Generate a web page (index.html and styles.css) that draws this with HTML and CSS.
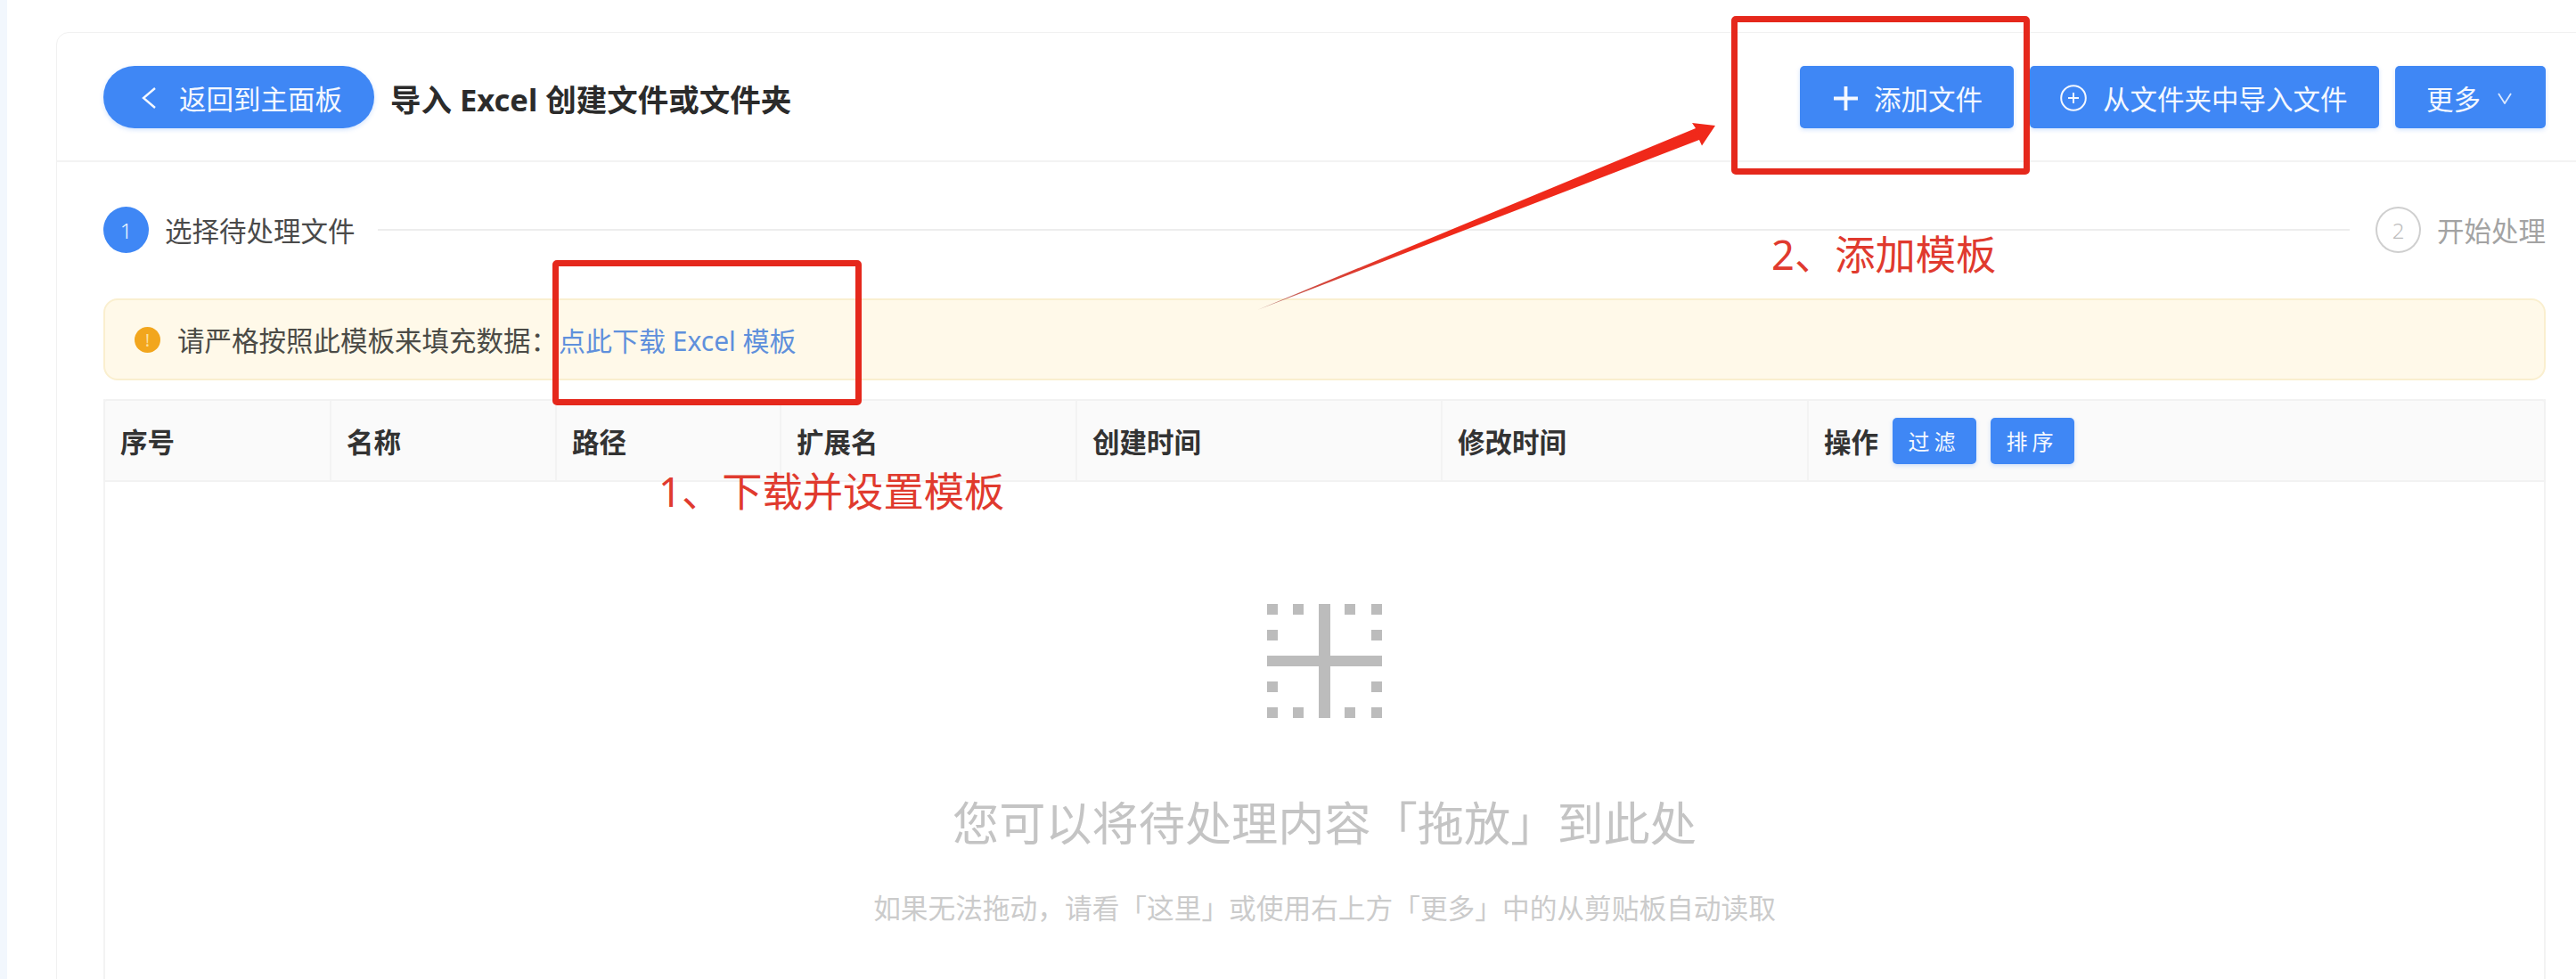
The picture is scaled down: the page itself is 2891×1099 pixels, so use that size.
FILE: index.html
```html
<!DOCTYPE html>
<html lang="zh-CN">
<head>
<meta charset="utf-8">
<title>导入 Excel 创建文件或文件夹</title>
<link rel="stylesheet" href="styles.css">
</head>
<body>
<div class="page">
  <aside class="strip"></aside>
  <main class="main">
    <section class="card">
      <header class="topbar">
        <button class="btn back">
          <svg class="ico-back" viewBox="0 0 18 26"><path d="M16 2 3 13l13 11"/></svg>
          <span>返回到主面板</span>
        </button>
        <h1 class="title">导入 Excel 创建文件或文件夹</h1>
        <div class="actions">
          <button class="btn add">
            <svg class="ico-plus" viewBox="0 0 27 27"><path d="M13.5 0v27M0 13.5h27"/></svg>
            <span>添加文件</span>
          </button>
          <button class="btn import">
            <svg class="ico-circle" viewBox="0 0 30 30"><circle cx="15" cy="15" r="13.8"/><path d="M15 9v12M9 15h12"/></svg>
            <span>从文件夹中导入文件</span>
          </button>
          <button class="btn more">
            <span>更多</span>
            <svg class="ico-down" viewBox="0 0 16 13"><path d="M1 1l7 11 7-11"/></svg>
          </button>
        </div>
      </header>

      <div class="body">
        <div class="steps">
          <span class="step-num active">1</span>
          <span class="step-text">选择待处理文件</span>
          <span class="step-line"></span>
          <span class="step-num">2</span>
          <span class="step-text muted">开始处理</span>
        </div>

        <div class="alert">
          <span class="alert-ico">!</span>
          <span class="alert-text">请严格按照此模板来填充数据：</span>
          <a class="alert-link">点此下载 Excel 模板</a>
        </div>

        <div class="table">
          <div class="thead">
            <div class="th">序号</div>
            <div class="th">名称</div>
            <div class="th">路径</div>
            <div class="th">扩展名</div>
            <div class="th">创建时间</div>
            <div class="th">修改时间</div>
            <div class="th last">
              <span>操作</span>
              <button class="btn mini">过滤</button>
              <button class="btn mini">排序</button>
            </div>
          </div>
          <div class="empty">
            <svg class="empty-ico" viewBox="0 0 129 128">
              <rect x="0" y="0" width="12" height="12"/><rect x="29" y="0" width="12" height="12"/>
              <rect x="87" y="0" width="12" height="12"/><rect x="117" y="0" width="12" height="12"/>
              <rect x="0" y="29" width="12" height="12"/><rect x="117" y="29" width="12" height="12"/>
              <rect x="0" y="87" width="12" height="12"/><rect x="117" y="87" width="12" height="12"/>
              <rect x="0" y="116" width="12" height="12"/><rect x="29" y="116" width="12" height="12"/>
              <rect x="87" y="116" width="12" height="12"/><rect x="117" y="116" width="12" height="12"/>
              <rect x="58" y="0" width="13" height="128"/><rect x="0" y="58" width="129" height="12"/>
            </svg>
            <p class="empty-title">您可以将待处理内容「拖放」到此处</p>
            <p class="empty-sub">如果无法拖动，请看「这里」或使用右上方「更多」中的从剪贴板自动读取</p>
          </div>
        </div>
      </div>
    </section>
  </main>

  <div class="mark box-one"></div>
  <div class="mark box-two"></div>
  <div class="note note-one">1、下载并设置模板</div>
  <div class="note note-two">2、添加模板</div>
  <svg class="arrow" viewBox="0 0 530 225">
    <defs>
      <linearGradient id="arrow-fill" x1="0" y1="1" x2="1" y2="0">
        <stop offset="0" stop-color="#b98d88"/>
        <stop offset="0.12" stop-color="#d14a40"/>
        <stop offset="0.35" stop-color="#ef2a1a"/>
        <stop offset="1" stop-color="#f0281a"/>
      </linearGradient>
    </defs>
    <path fill="url(#arrow-fill)" d="M1 222 493 18 489 12 515 15 500 37.5 497 31Z"/>
  </svg>
</div>
</body>
</html>
```

FILE: styles.css
```css
* { box-sizing: border-box; }
html, body { margin: 0; height: 100%; background: #fff; }
body {
  font-family: "Noto Sans", "Noto Sans CJK SC", sans-serif;
  overflow: hidden;
}
.page { position: relative; display: flex; width: 2891px; height: 1099px; overflow: hidden; }
.strip { flex: 0 0 8px; background: #f2f7fd; }
.main { flex: 1; min-width: 0; padding: 36px 0 0 55px; }
.card {
  width: 2845px;
  height: 1080px;
  border: 1px solid #f1f1f1;
  border-radius: 14px 14px 0 0;
  background: #fff;
}
.topbar {
  display: flex;
  align-items: center;
  height: 145px;
  padding: 0 50px 0 52px;
  border-bottom: 2px solid #f3f3f3;
}
.btn {
  display: inline-flex;
  align-items: center;
  height: 70px;
  padding-top: 4px;
  border: 0;
  border-radius: 5px;
  background: #3f87f5;
  color: #f4f8ff;
  font: inherit;
  font-size: 30.5px;
  white-space: nowrap;
  box-shadow: 0 2px 5px rgba(63, 135, 245, .22);
}
.back { width: 304px; padding-left: 42px; gap: 25px; border-radius: 35px; }
.ico-back { width: 18px; height: 26px; fill: none; stroke: #f4f8ff; stroke-width: 2.4; }
.title { margin: 6px 0 0 18px; font-size: 34.5px; line-height: 48px; font-weight: 700; color: #2b2b2b; }
.actions { display: flex; margin-left: auto; gap: 18px; }
.add { width: 240px; padding-left: 38px; gap: 18px; }
.import { width: 392px; padding-left: 34px; gap: 18px; }
.more { width: 169px; padding-left: 35px; gap: 19px; }
.ico-plus { width: 27px; height: 27px; fill: none; stroke: #f4f8ff; stroke-width: 3.8; }
.ico-circle { width: 30px; height: 30px; fill: none; stroke: #f4f8ff; stroke-width: 2; }
.ico-down { width: 16px; height: 13px; fill: none; stroke: #dbe8fd; stroke-width: 1.8; }

.body { padding: 50px 50px 0 52px; }
.steps { display: flex; align-items: center; height: 52px; }
.step-num {
  display: flex;
  align-items: center;
  justify-content: center;
  flex: 0 0 51px;
  height: 52px;
  border: 2px solid #cfcfcf;
  border-radius: 50%;
  color: #bdbdbd;
  font-size: 24px;
  font-weight: 300;
}
.step-num.active { border-color: #3f87f5; background: #3f87f5; color: #eef5ff; }
.step-text { margin-left: 18px; font-size: 30.5px; color: #4a4a4a; white-space: nowrap; }
.step-text.muted { color: #a3a3a3; }
.step-line { flex: 1; height: 2px; margin: 0 29px 0 25px; background: #ededed; }

.alert {
  display: flex;
  align-items: center;
  height: 92px;
  margin-top: 51px;
  padding-left: 33px;
  border: 2px solid #faefcf;
  border-radius: 16px;
  background: #fff9e9;
  font-size: 30.5px;
}
.alert-ico {
  display: flex;
  align-items: center;
  justify-content: center;
  flex: 0 0 29px;
  height: 29px;
  border-radius: 50%;
  background: #f2a61d;
  color: #fbdf9c;
  font-size: 20px;
}
.alert-text { margin-left: 19px; color: #4b4b46; white-space: nowrap; }
.alert-link { margin-left: 1px; font-size: 30px; color: #5f90dc; white-space: nowrap; }

.table { margin-top: 21px; height: 652px; border: solid #f3f3f3; border-width: 0 2px; }
.thead {
  display: grid;
  grid-template-columns: 252px 253px 252px 332px 410px 411px 1fr;
  height: 93px;
  margin: 0 -2px;
  border: 2px solid #f2f2f2;
  border-radius: 4px 4px 0 0;
  background: #fafafa;
}
.th {
  display: flex;
  align-items: center;
  padding-left: 17px;
  border-left: 2px solid #f3f3f3;
  font-size: 30.5px;
  font-weight: 700;
  color: #333;
}
.th:first-child { border-left: 0; }
.last { gap: 16px; }
.mini {
  justify-content: center;
  width: 94px;
  height: 52px;
  padding-top: 0;
  padding-left: 5px;
  font-size: 24px;
  font-weight: 400;
  letter-spacing: 5px;
}
.empty { display: flex; flex-direction: column; align-items: center; padding-top: 137px; }
.empty-ico { width: 129px; height: 128px; fill: #bcbcbc; }
.empty-title { margin: 80px 0 0; font-size: 52.2px; line-height: 76px; color: #c4c4c4; white-space: nowrap; }
.empty-sub { margin: 34px 0 0; font-size: 30.7px; line-height: 46px; color: #cbcbcb; white-space: nowrap; }

.mark { position: absolute; border: 7px solid #e5281c; border-radius: 5px; }
.box-one { left: 620px; top: 292px; width: 347px; height: 163px; }
.box-two { left: 1943px; top: 18px; width: 335px; height: 178px; }
.note { position: absolute; font-size: 45.3px; line-height: 60px; color: #e03a2e; white-space: nowrap; }
.note-one { left: 739px; top: 522px; }
.note-two { left: 1988px; top: 256px; }
.arrow { position: absolute; left: 1410px; top: 126px; width: 530px; height: 225px; }
```
